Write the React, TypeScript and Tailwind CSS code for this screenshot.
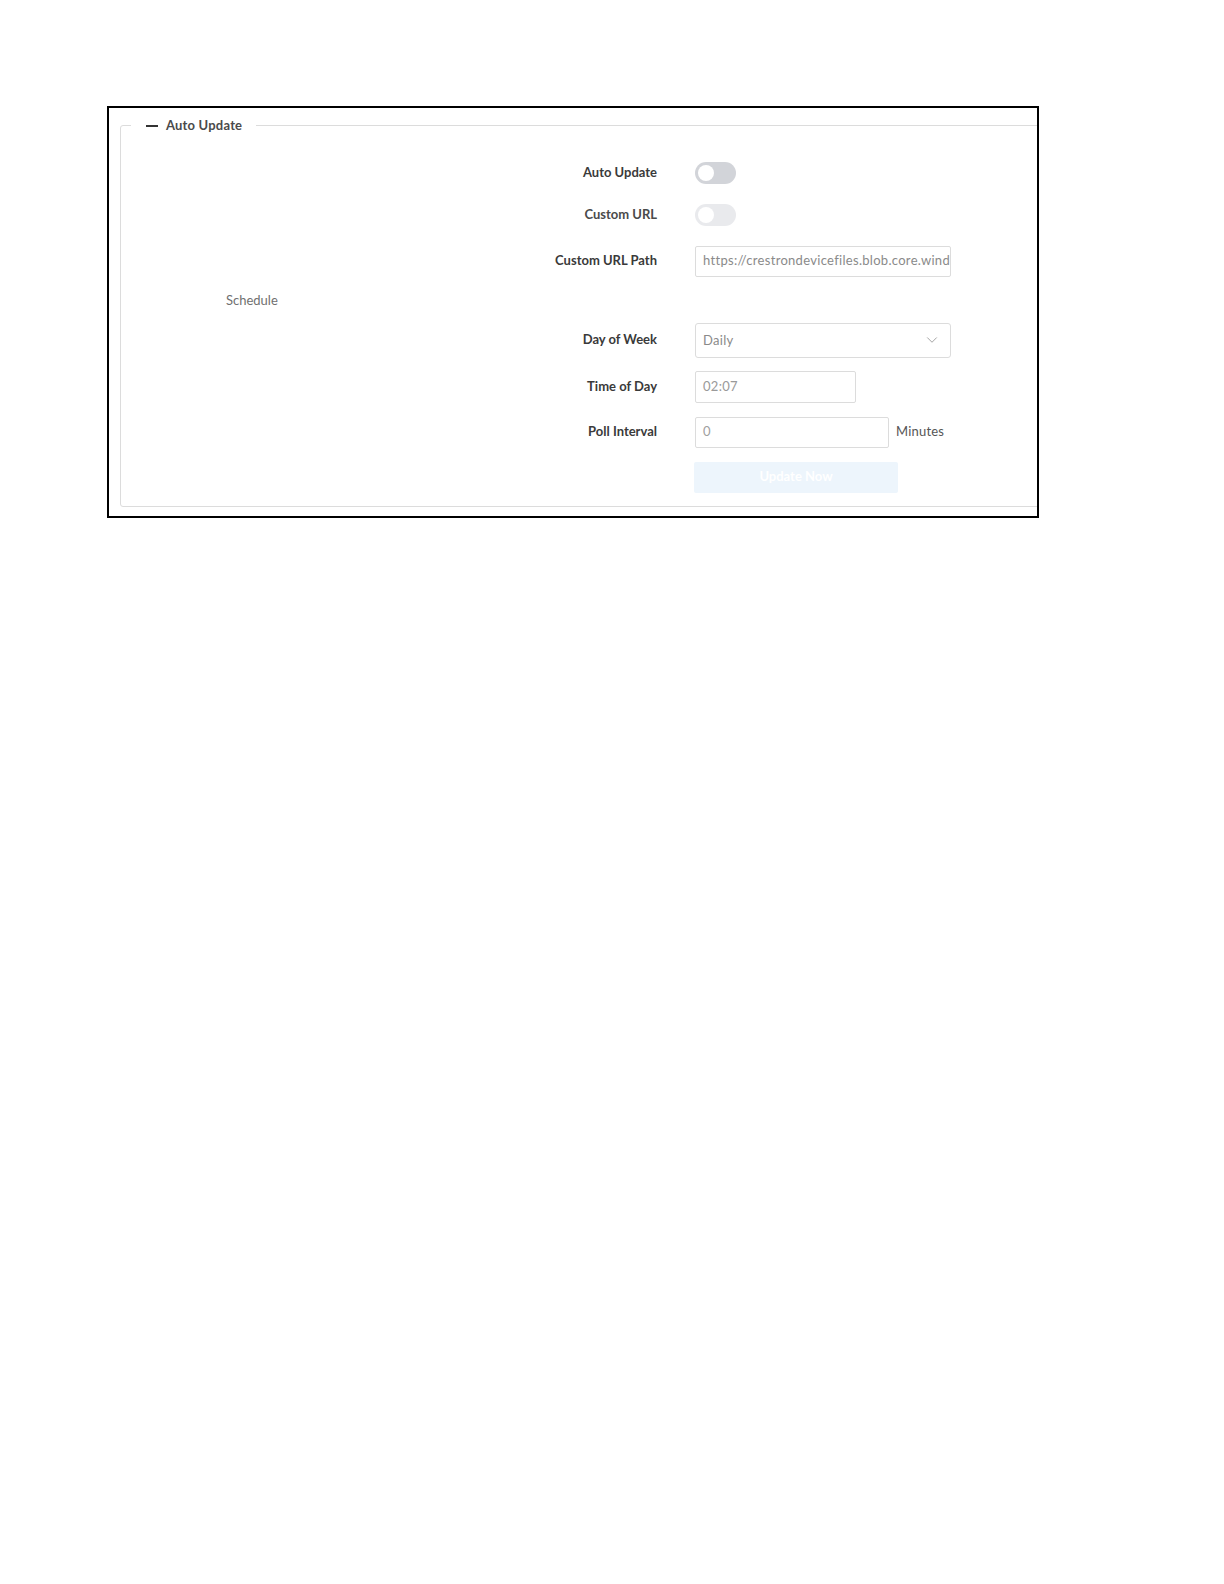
import React from 'react';
import { ChevronDown } from 'lucide-react';

const font = { fontFamily: 'Lato, "Open Sans", Arial, sans-serif' };

function Toggle({ disabled }: { disabled?: boolean }) {
  return (
    <div
      className={`w-[41px] h-[22px] rounded-full flex items-center px-[3px] ${
        disabled ? 'bg-[#e9eaed]' : 'bg-[#d2d4d9]'
      }`}
    >
      <div className="w-[16px] h-[16px] rounded-full bg-white" />
    </div>
  );
}

function Row({
  label,
  light,
  className = '',
  children
}: {
  label?: string;
  light?: boolean;
  className?: string;
  children: React.ReactNode;
}) {
  return (
    <div className={`flex items-center ${className}`}>
      <div
        className={`w-[536px] text-right text-[13px] font-bold ${
          light ? 'text-[#4a4a4a]' : 'text-[#3a3a3a]'
        }`}
      >
        {label}
      </div>
      <div className="ml-[38px] flex items-center">{children}</div>
    </div>
  );
}

export default function App() {
  return (
    <div className="bg-white pt-[106px] pl-[107px]" style={font}>
      <div className="w-[932px] h-[412px] border-2 border-black overflow-hidden pl-[11px] pt-[8px]">
        <fieldset className="w-[960px] h-[391px] border border-[#dcdcdc] rounded-[3px] m-0 p-0">
          <legend className="ml-[10px] pl-[15px] pr-[14px] flex items-center gap-[8px] text-[13px] font-bold text-[#4a4a4a] tracking-[0.2px]">
            <span className="w-[12px] h-[2px] bg-[#333]" />
            Auto Update
          </legend>

          <Row label="Auto Update" className="mt-[26px]">
            <Toggle />
          </Row>
          <Row label="Custom URL" light className="mt-[20px]">
            <Toggle disabled />
          </Row>
          <Row label="Custom URL Path" className="mt-[20px]">
            <div className="w-[256px] h-[31px] border border-[#dcdcdc] rounded-[2px] px-[7px] flex items-center overflow-hidden whitespace-nowrap text-[13px] tracking-[0.3px] text-[#8a8a8a]">
              https://crestrondevicefiles.blob.core.windows.net
            </div>
          </Row>

          <div className="mt-[13px] pl-[105px] text-[13px] text-[#707070] h-[20px] leading-[20px]">
            Schedule
          </div>

          <Row label="Day of Week" className="mt-[13px]">
            <div className="w-[256px] h-[35px] border border-[#dcdcdc] rounded-[3px] pl-[7px] pr-[9px] flex items-center justify-between text-[13px] tracking-[0.3px] text-[#8a8a8a]">
              <span className="mt-[2px]">Daily</span>
              <ChevronDown className="w-[18px] h-[18px] text-[#9a9a9a]" strokeWidth={1.2} />
            </div>
          </Row>
          <Row label="Time of Day" className="mt-[13px]">
            <div className="w-[161px] h-[32px] border border-[#dcdcdc] rounded-[2px] px-[7px] flex items-center text-[13px] tracking-[0.3px] text-[#9a9a9a]">
              02:07
            </div>
          </Row>
          <Row label="Poll Interval" className="mt-[14px]">
            <div className="w-[194px] h-[31px] border border-[#dcdcdc] rounded-[2px] px-[7px] flex items-center text-[13px] text-[#a0a0a0]">
              0
            </div>
            <span className="ml-[7px] text-[13px] tracking-[0.2px] text-[#555]">Minutes</span>
          </Row>
          <Row className="mt-[14px]">
            <div className="-ml-[1px] w-[204px] h-[31px] bg-[#edf5fc] rounded-[2px] flex items-center justify-center text-[13px] font-bold text-white">
              Update Now
            </div>
          </Row>
        </fieldset>
      </div>
    </div>
  );
}
